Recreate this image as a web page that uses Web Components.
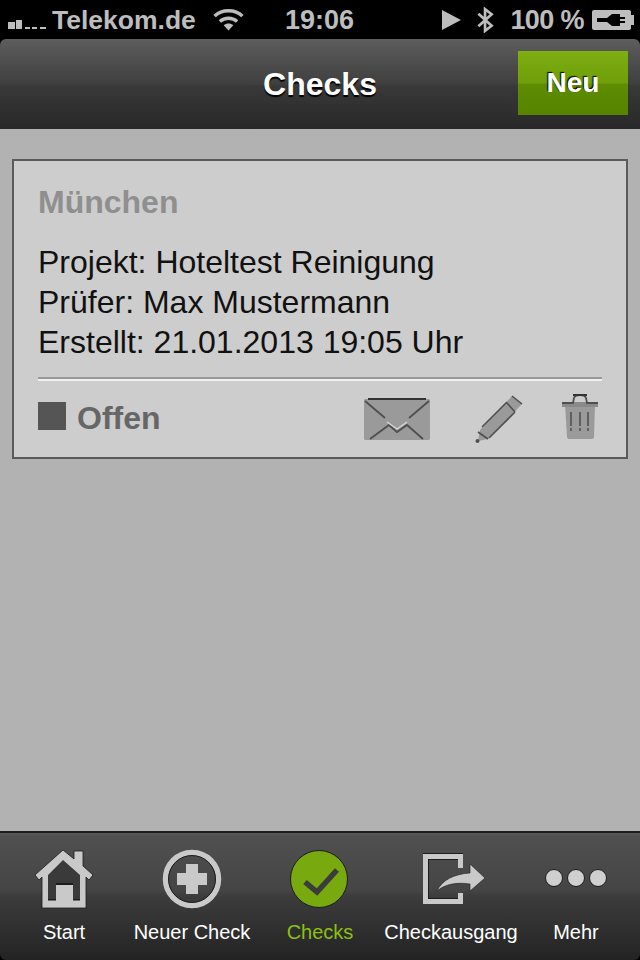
<!DOCTYPE html>
<html lang="de">
<head>
<meta charset="utf-8">
<title>Checks</title>
<style>
html, body { margin: 0; padding: 0; background: #000; }
body { font-family: "Liberation Sans", Arial, sans-serif; }
</style>
</head>
<body>
<app-shell>
    <status-bar slot="status"></status-bar>
    <nav-bar slot="nav" title="Checks" action="Neu"></nav-bar>
    <check-card city="München" project="Hoteltest Reinigung" tester="Max Mustermann" created="21.01.2013 19:05 Uhr" state="Offen"></check-card>
    <tab-bar slot="tabs">
        <tab-item label="Start">
            <svg viewBox="0 0 60 60" width="60" height="60" style="filter:blur(.35px)">
                <path fill="#c9c9c9" stroke="#1c1c1c" stroke-width=".8" d="M29 1 L40 10 V2 H49 V17 L59 26 L55 31 L52 28 V59 H8 V28 L5 31 L1 26 Z"/>
                <path fill="#3a3a3a" d="M29 11 L46 26 V51 H39 V35 H22 V51 H14 V26 Z"/>
                <path fill="#1c1c1c" d="M22 34 H39 V36 H22 Z M14 50 H22 V51.500 H14 Z M39 50 H46 V51.500 H39 Z"/>
            </svg>
        </tab-item>
        <tab-item label="Neuer Check">
            <svg viewBox="0 0 60 60" width="60" height="60" style="filter:blur(.35px)">
                <circle cx="30" cy="30" r="26.500" fill="none" stroke="#c9c9c9" stroke-width="5.500"/>
                <circle cx="30" cy="30" r="23.500" fill="none" stroke="#1c1c1c" stroke-width="1"/>
                <path fill="#c9c9c9" d="M24 15 H36 V24 H45 V36 H36 V45 H24 V36 H15 V24 H24 Z"/>
            </svg>
        </tab-item>
        <tab-item label="Checks" active>
            <svg viewBox="0 0 60 60" width="60" height="60">
                <circle cx="29" cy="30" r="28.500" fill="#78a90f" stroke="#1c1c1c" stroke-width="1"/>
                <path fill="none" stroke="#3c3c3c" stroke-width="5.500" d="M15 33 L27 43 L47 21"/>
            </svg>
        </tab-item>
        <tab-item label="Checkausgang" class="wide">
            <svg viewBox="0 0 62 52" width="62" height="52" style="margin-left:6px;margin-top:-1px;filter:blur(.35px)">
                <path fill="#c9c9c9" d="M0 1 H40 V15 H35 V6 H5 V46 H35 V40 H40 V51 H0 Z"/>
                <path fill="#1c1c1c" d="M0 0 H40 V1 H0 Z M5 6 H35 V7 H6 V45 H35 V46 H5 Z"/>
                <path fill="#c9c9c9" stroke="#1c1c1c" stroke-width=".6" d="M14 38 C19 27 31 21 47 20 V11 L62 25 L47 38 V31 C34 29 22 31 14 38 Z"/>
            </svg>
        </tab-item>
        <tab-item label="Mehr">
            <svg viewBox="0 0 62 60" width="62" height="60">
                <g fill="#cfcfcf" stroke="#1c1c1c" stroke-width="1">
                    <circle cx="9" cy="29" r="8.500"/>
                    <circle cx="31" cy="29" r="8.500"/>
                    <circle cx="53" cy="29" r="8.500"/>
                </g>
            </svg>
        </tab-item>
    </tab-bar>
</app-shell>

<script>
class AppShell extends HTMLElement {
    constructor() {
        super();
        const templateNode = document.createElement('template');
        templateNode.innerHTML = `
            <style>
            :host {
                display: flex;
                flex-direction: column;
                width: 640px;
                height: 960px;
                overflow: hidden;
                background: #000;
            }
            .content {
                flex: 1;
                background: #b2b2b2;
                padding: 30px 12px 0;
                min-height: 0;
            }
            </style>
            <slot name="status"></slot>
            <slot name="nav"></slot>
            <div class="content"><slot></slot></div>
            <slot name="tabs"></slot>
        `;
        this.attachShadow({ mode: "open" }).appendChild(templateNode.content.cloneNode(true));
    }
}

class StatusBar extends HTMLElement {
    constructor() {
        super();
        const templateNode = document.createElement('template');
        templateNode.innerHTML = `
            <style>
            :host {
                display: grid;
                grid-template-columns: 1fr auto 1fr;
                align-items: center;
                height: 39px;
                flex: none;
                padding: 1px 6px 0 8px;
                box-sizing: border-box;
                background: #000;
                color: #bdbdbd;
                font: bold 27px/36px "Liberation Sans", Arial, sans-serif;
            }
            .left, .right { display: flex; align-items: center; }
            .right { justify-content: flex-end; }
            .carrier { margin-left: 6px; font-size: 26.500px; }
            svg { display: block; flex: none; }
            .bars { margin-top: 4px; }
            .wifi { margin-left: 17px; margin-top: -2px; }
            .time { margin-right: 3px; }
            .play { margin-right: 16px; }
            .bt { margin-right: 16px; }
            .pct { margin-right: 8px; letter-spacing: -.6px; }
            </style>
            <div class="left">
                <svg class="bars" width="38" height="14" viewBox="0 0 38 14">
                    <path fill="#bdbdbd" d="M0 7 H7 V14 H0 Z M8 5 H14 V14 H8 Z M17 12 H22 V14 H17 Z M24 12 H29 V14 H24 Z M32 12 H38 V14 H32 Z"/>
                </svg>
                <span class="carrier">Telekom.de</span>
                <svg class="wifi" width="31" height="23" viewBox="0 0 32 24">
                    <g fill="none" stroke="#bdbdbd" stroke-width="3.600">
                        <path d="M1.500 8.500 C9 1 23 1 30.500 8.500"/>
                        <path d="M7 14 C12 9.500 20 9.500 25 14"/>
                    </g>
                    <path fill="#bdbdbd" d="M11 18 C14 15.500 18 15.500 21 18 L16 23.500 Z"/>
                </svg>
            </div>
            <div class="time">19:06</div>
            <div class="right">
                <svg class="play" width="19" height="20" viewBox="0 0 19 20"><path fill="#bdbdbd" d="M0 0 L19 10 L0 20 Z"/></svg>
                <svg class="bt" width="17" height="26" viewBox="0 0 18 27"><path fill="none" stroke="#bdbdbd" stroke-width="2.800" d="M1.500 7 L15.500 19.500 L8.500 25 V2 L15.500 7.500 L1.500 20"/></svg>
                <span class="pct">100 %</span>
                <svg width="42" height="20" viewBox="0 0 42 20">
                    <path fill="#bdbdbd" fill-rule="evenodd" d="M2 0 H37 Q39 0 39 2 V5 H42 V15 H39 V18 Q39 20 37 20 H2 Q0 20 0 18 V2 Q0 0 2 0 Z M5 8 V12 H15 L20 16 H28 V13 H33 V11 H28 V9 H33 V7 H28 V4 H20 L15 8 Z"/>
                </svg>
            </div>
        `;
        this.attachShadow({ mode: "open" }).appendChild(templateNode.content.cloneNode(true));
    }
}

class NavBar extends HTMLElement {
    constructor() {
        super();
        const templateNode = document.createElement('template');
        templateNode.innerHTML = `
            <style>
            :host {
                display: grid;
                grid-template-columns: 1fr auto 1fr;
                align-items: start;
                flex: none;
                height: 90px;
                padding: 12px 12px 0;
                box-sizing: border-box;
                border-radius: 6px 6px 0 0;
                background: linear-gradient(#5d5d5d 0, #3f3f3f 50%, #393939 52%, #282828 100%);
                font-family: "Liberation Sans", Arial, sans-serif;
                color: #fff;
            }
            h1 {
                grid-column: 2;
                margin: 0;
                font-size: 32px;
                line-height: 66px;
                font-weight: bold;
                text-shadow: 0 2px 1px #000;
            }
            button {
                grid-column: 3;
                justify-self: end;
                width: 110px;
                height: 64px;
                border: 0;
                padding: 0;
                color: #fff;
                font: bold 28px "Liberation Sans", Arial, sans-serif;
                text-shadow: -1px -1px 1px #000;
                background: linear-gradient(#7eae10 0, #6f9e0a 50%, #5e8c02 52%, #578300 100%);
            }
            </style>
            <h1></h1>
            <button type="button"></button>
        `;
        const root = this.attachShadow({ mode: "open" });
        root.appendChild(templateNode.content.cloneNode(true));
        root.querySelector('h1').textContent = this.getAttribute('title');
        root.querySelector('button').textContent = this.getAttribute('action');
    }
}

class CheckCard extends HTMLElement {
    constructor() {
        super();
        const templateNode = document.createElement('template');
        templateNode.innerHTML = `
            <style>
            :host {
                display: block;
                box-sizing: border-box;
                height: 300px;
                padding: 0 24px;
                border: 2px solid #5a5a5a;
                background: #cdcdcd;
                font-family: "Liberation Sans", Arial, sans-serif;
                color: #111;
            }
            h2 {
                margin: 0;
                padding-top: 22px;
                font-size: 32px;
                line-height: 38px;
                color: #8f8f8f;
            }
            .lines {
                margin-top: 21px;
                font-size: 32px;
                line-height: 40px;
            }
            hr {
                margin: 15px 0 0;
                height: 2px;
                border: 0;
                background: #999;
                border-bottom: 2px solid #f0f0f0;
            }
            .foot {
                display: flex;
                align-items: center;
                height: 76px;
                padding-right: 4px;
            }
            .square { width: 28px; height: 28px; background: #555; margin: -7px 11px 0 0; }
            .state { font-size: 32px; font-weight: bold; color: #666; flex: 1; margin-top: -2px; }
            svg { display: block; flex: none; filter: blur(.6px); }
            .mail { margin-right: 44px; }
            .pen { margin-right: 39px; }
            .bin { margin-top: -5px; }
            </style>
            <h2></h2>
            <div class="lines">
                <div class="project"></div>
                <div class="tester"></div>
                <div class="created"></div>
            </div>
            <hr>
            <div class="foot">
                <span class="square"></span>
                <span class="state"></span>
                <svg class="mail" width="68" height="43" viewBox="0 0 68 43">
                    <path fill="#9a9a9a" d="M2 1 H66 L67 2 V41 L66 42 H2 L1 41 V2 Z"/>
                    <path fill="#333" d="M5 0 H63 V2 H5 Z"/>
                    <g fill="none" stroke="#4f4f4f" stroke-width="1.800">
                        <path d="M2 3 L22 20 M66 3 L46 20"/>
                        <path d="M7 41 L26 27 L34 34 L44 27 L60 41"/>
                    </g>
                    <path fill="none" stroke="#d8d8d8" stroke-width="1.200" d="M24 24 L34 31 L44 24"/>
                </svg>
                <svg class="pen" width="48" height="48" viewBox="0 0 48 48">
                    <path fill="#9a9a9a" d="M37 1 L47 9 L13 44 L3 46 L5 35 Z"/>
                    <path fill="none" stroke="#4f4f4f" stroke-width="1.600" d="M32 7 L7 32 M40 17 L14 43 M32 8 L40 17 M3 37 L13 44 M37 1 L47 9"/>
                    <circle cx="2.500" cy="46" r="2" fill="#4f4f4f"/>
                </svg>
                <svg class="bin" width="36" height="45" viewBox="0 0 36 45">
                    <path fill="#9a9a9a" d="M3 10 H33 L32 43 Q32 45 30 45 H7 Q5 45 5 43 Z"/>
                    <path fill="#8a8a8a" d="M0 8 H36 V13 H0 Z"/>
                    <path fill="none" stroke="#4f4f4f" stroke-width="1.800" d="M0 9 H11 L12 4 Q13 1 18 1 Q23 1 24 4 L25 9 H36"/>
                    <path fill="#333" d="M11 0 H25 V2 H11 Z"/>
                    <path fill="none" stroke="#5a5a5a" stroke-width="1.800" stroke-dasharray="14 2 3" d="M9 18 V38 M18 18 V38 M26 18 V38"/>
                </svg>
            </div>
        `;
        const root = this.attachShadow({ mode: "open" });
        root.appendChild(templateNode.content.cloneNode(true));
        root.querySelector('h2').textContent = this.getAttribute('city');
        root.querySelector('.project').textContent = 'Projekt: ' + this.getAttribute('project');
        root.querySelector('.tester').textContent = 'Prüfer: ' + this.getAttribute('tester');
        root.querySelector('.created').textContent = 'Erstellt: ' + this.getAttribute('created');
        root.querySelector('.state').textContent = this.getAttribute('state');
    }
}

class TabBar extends HTMLElement {
    constructor() {
        super();
        const templateNode = document.createElement('template');
        templateNode.innerHTML = `
            <style>
            :host {
                display: grid;
                grid-template-columns: repeat(5, 128px);
                flex: none;
                height: 129px;
                box-sizing: border-box;
                border-top: 2px solid #1b1b1b;
                border-radius: 0 0 6px 6px;
                background: linear-gradient(#5b5b5b 0, #505050 3px, #454545 45%, #3c3c3c 50%, #232323 100%);
            }
            </style>
            <slot></slot>
        `;
        this.attachShadow({ mode: "open" }).appendChild(templateNode.content.cloneNode(true));
    }
}

class TabItem extends HTMLElement {
    constructor() {
        super();
        const templateNode = document.createElement('template');
        templateNode.innerHTML = `
            <style>
            :host {
                display: flex;
                flex-direction: column;
                align-items: center;
                padding-top: 16px;
                color: #fff;
                font: 20px/24px "Liberation Sans", Arial, sans-serif;
                white-space: nowrap;
            }
            :host([active]) { color: #8cc011; }
            :host(.wide) { padding-left: 6px; }
            .icon { height: 60px; display: flex; align-items: center; justify-content: center; }
            .label { margin-top: 11px; }
            </style>
            <div class="icon"><slot></slot></div>
            <div class="label"></div>
        `;
        const root = this.attachShadow({ mode: "open" });
        root.appendChild(templateNode.content.cloneNode(true));
        root.querySelector('.label').textContent = this.getAttribute('label');
    }
}

customElements.define("app-shell", AppShell);
customElements.define("status-bar", StatusBar);
customElements.define("nav-bar", NavBar);
customElements.define("check-card", CheckCard);
customElements.define("tab-bar", TabBar);
customElements.define("tab-item", TabItem);
</script>
</body>
</html>
